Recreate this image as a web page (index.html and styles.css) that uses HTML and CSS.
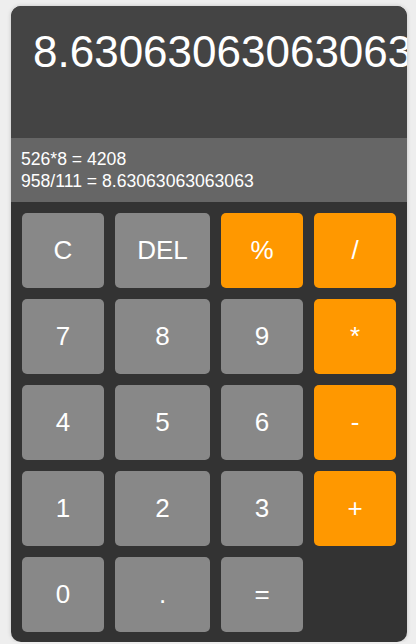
FILE: index.html
```html
<!DOCTYPE html>
<html>
<head>
<meta charset="utf-8">
<link rel="stylesheet" href="styles.css">
</head>
<body>
<div class="calc">
  <div class="display">8.63063063063063</div>
  <div class="history">
    <div>526*8 = 4208</div>
    <div>958/111 = 8.63063063063063</div>
  </div>
  <div class="keys">
    <button class="key">C</button>
    <button class="key">DEL</button>
    <button class="key op">%</button>
    <button class="key op">/</button>
    <button class="key">7</button>
    <button class="key">8</button>
    <button class="key">9</button>
    <button class="key op">*</button>
    <button class="key">4</button>
    <button class="key">5</button>
    <button class="key">6</button>
    <button class="key op">-</button>
    <button class="key">1</button>
    <button class="key">2</button>
    <button class="key">3</button>
    <button class="key op">+</button>
    <button class="key">0</button>
    <button class="key">.</button>
    <button class="key">=</button>
  </div>
</div>
</body>
</html>
```
FILE: styles.css
```css
html, body {
  margin: 0;
  padding: 0;
  background: #eeeeee;
  font-family: "Liberation Sans", Arial, sans-serif;
}
.calc {
  width: 396px;
  margin: 6px 0 0 11px;
  background: #333333;
  border-radius: 10px;
  overflow: hidden;
  box-shadow: 0 0 4px rgba(0, 0, 0, 0.18);
}
.display {
  height: 132px;
  box-sizing: border-box;
  padding: 21px 0 0 22px;
  background: #444444;
  color: #ffffff;
  font-size: 44px;
  white-space: nowrap;
  overflow: hidden;
}
.history {
  background: #666666;
  color: #ffffff;
  padding: 10px 10px;
  font-size: 17.6px;
  line-height: 22px;
}
.keys {
  display: grid;
  grid-template-columns: 82px 95px 82px 82px;
  grid-auto-rows: 75px;
  gap: 11px;
  padding: 11px 11px 10px 11px;
}
.key {
  border: none;
  border-radius: 5px;
  background: #888888;
  color: #ffffff;
  font-family: "Liberation Sans", Arial, sans-serif;
  font-size: 26px;
  padding: 0;
  margin: 0;
}
.key.op {
  background: #ff9800;
}
```
